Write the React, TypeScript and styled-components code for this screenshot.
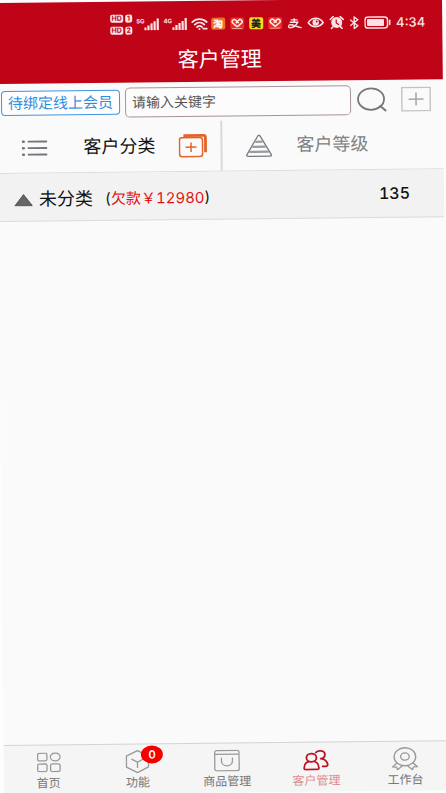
import React from "react";
import styled, { createGlobalStyle } from "styled-components";

const GlobalStyle = createGlobalStyle`
  * { box-sizing: border-box; }
  body {
    margin: 0;
    background: #fdfdfd;
    font-family: Inter, "Noto Sans CJK SC", sans-serif;
  }
  button, input { font-family: inherit; }
`;

const Stage = styled.div`
  height: 100vh;
  overflow: hidden;
`;

/* The whole page lies at a slight tilt. */
const Page = styled.div`
  display: flex;
  flex-direction: column;
  width: 100%;
  height: calc(100vh - 1px);
  background: #fafafa;
  transform-origin: 0 0;
  transform: translate(-4px, 3px) rotate(-0.6deg);
`;

const Header = styled.header`
  padding: 10px 0;
  background: #c00418;
  color: #fff;
`;

const StatusBar = styled.div`
  display: flex;
  align-items: center;
  justify-content: flex-end;
  gap: 5px;
  height: 26px;
  padding-right: 17px;
  color: #fbe3e5;
`;

const NetworkGroup = styled.div`
  display: flex;
  align-items: center;
  gap: 4px;
  margin-right: -2px;
`;

const HdStack = styled.div`
  display: grid;
  grid-template-columns: 13px 7px;
  gap: 4px 2px;
`;

const HdTag = styled.span`
  height: 8px;
  border-radius: 2px;
  background: #fbe3e5;
  color: #c00418;
  font-size: 7px;
  font-weight: 700;
  line-height: 8px;
  text-align: center;
`;

const Signal = styled.div`
  display: flex;
  align-items: center;
`;

const Network = styled.span`
  align-self: flex-start;
  font-size: 6px;
  font-weight: 700;
  line-height: 6px;
`;

const AppTile = styled.span<{ $bg: string; $fg: string }>`
  width: 14px;
  height: 12px;
  border-radius: 2px;
  background: ${(p) => p.$bg};
  color: ${(p) => p.$fg};
  font-size: 10px;
  font-weight: 900;
  line-height: 12px;
  text-align: center;
  svg { display: block; margin: 0 auto; }
`;

const Clock = styled.span`
  font-size: 13px;
  font-weight: 500;
  line-height: 16px;
`;

const Title = styled.h1`
  margin: 0;
  padding-top: 11px;
  font-size: 21px;
  font-weight: 400;
  line-height: 24px;
  text-align: center;
`;

const SearchRow = styled.form`
  display: flex;
  align-items: center;
  height: 39px;
  padding: 0 12px 0 4px;
`;

const BindButton = styled.button`
  flex: none;
  height: 25px;
  padding: 0 6px;
  border: 1px solid #3f95df;
  border-radius: 4px;
  background: #fdfdfd;
  color: #2f8ddd;
  font-size: 15px;
  line-height: 20px;
  white-space: nowrap;
`;

const Keyword = styled.input`
  flex: 1;
  min-width: 0;
  height: 30px;
  margin-left: 5px;
  padding: 0 6px;
  border: 1px solid #a89494;
  border-radius: 5px;
  background: #fcfcfc;
  color: #333;
  font-size: 14px;
  &::placeholder { color: #555; opacity: 1; }
`;

const IconButton = styled.button<{ $gap: number }>`
  flex: none;
  display: flex;
  margin: 0 0 0 ${(p) => p.$gap}px;
  padding: 0;
  border: 0;
  background: none;
`;

const Tabs = styled.nav`
  display: grid;
  grid-template-columns: 1fr 1fr;
  height: 51px;
  border-bottom: 1px solid #dcdcdc;
`;

const TabCell = styled.div<{ $start: number }>`
  display: flex;
  align-items: center;
  padding-left: ${(p) => p.$start}px;
  & + & { border-left: 2px solid #d9d9d9; }
`;

const TabButton = styled.button<{ $active?: boolean; $gap: number }>`
  margin: 0;
  padding: 0 0 0 ${(p) => p.$gap}px;
  border: 0;
  background: none;
  color: ${(p) => (p.$active ? "#111" : "#808080")};
  font-size: 18px;
  line-height: 24px;
  white-space: nowrap;
`;

const GroupRow = styled.button`
  display: flex;
  align-items: center;
  width: 100%;
  height: 48px;
  padding: 0 34px 0 16px;
  border: 0;
  border-bottom: 1px solid #dcdcdc;
  background: #f2f2f2;
  color: #111;
  font-size: 18px;
  text-align: left;
  font-variant-numeric: tabular-nums;
  svg { margin-top: 6px; }
`;

const GroupName = styled.span`
  padding: 4px 0 0 6px;
  line-height: 24px;
`;

const Debt = styled.span`
  flex: 1;
  padding: 4px 0 0 12px;
  font-size: 15px;
  line-height: 24px;
`;

const Amount = styled.span`
  color: #e01414;
`;

const Count = styled.span`
  padding-bottom: 2px;
  font-size: 16px;
  font-weight: 500;
  line-height: 24px;
`;

const List = styled.main`
  flex: 1;
`;

const Footer = styled.nav`
  display: grid;
  grid-template-columns: repeat(5, 1fr);
  height: 50px;
  border-top: 1px solid #d4d4d4;
  background: #f5f5f5;
`;

const FooterLink = styled.a<{ $active?: boolean }>`
  display: flex;
  flex-direction: column;
  align-items: center;
  padding-top: 4px;
  color: ${(p) => (p.$active ? "#df8b92" : "#777")};
  font-size: 12px;
  line-height: 16px;
  text-decoration: none;
  white-space: nowrap;
`;

const IconSlot = styled.span`
  position: relative;
  display: flex;
  height: 26px;
  align-items: center;
`;

const Badge = styled.span`
  position: absolute;
  left: 16px;
  top: -3px;
  width: 22px;
  height: 18px;
  border-radius: 50%;
  background: #f40000;
  color: #fff;
  font-size: 11px;
  font-weight: 600;
  line-height: 18px;
  text-align: center;
`;

const SignalBars = ({ network }: { network: string }) => (
  <Signal>
    <Network>{network}</Network>
    <svg width="15" height="12" viewBox="0 0 15 12" fill="currentColor">
      <rect x="0" y="9" width="2.2" height="3" />
      <rect x="3.1" y="7" width="2.2" height="5" />
      <rect x="6.2" y="5" width="2.2" height="7" />
      <rect x="9.3" y="3" width="2.2" height="9" />
      <rect x="12.4" y="0" width="2.2" height="12" />
    </svg>
  </Signal>
);

const HeartTile = () => (
  <AppTile $bg="#ee2a24" $fg="#fff">
    <svg width="14" height="12" viewBox="0 0 14 12" fill="none" stroke="#ffe9e6" strokeWidth="1.6">
      <path d="M7 9.3 2.5 5.5C.8 3.5 3.8.8 5.6 2.8L8.400 5.600M7 9.300l4.500-3.800C13.200 3.500 10.200.8 8.400 2.800L5.600 5.600" />
      <path d="M2 11h10" stroke="#f9a09a" strokeWidth="1" />
    </svg>
  </AppTile>
);

const WifiIcon = () => (
  <svg width="17" height="13" viewBox="0 0 17 13" fill="none" stroke="currentColor" strokeWidth="1.8" strokeLinecap="round">
    <path d="M1 4.2C5 .2 11.5.2 15.5 4.2M3.5 6.7c2.8-2.6 6.8-2.6 9.5 0M5.8 9.2c1.5-1.4 3.5-1.4 5 0" />
    <circle cx="8.2" cy="11.2" r="1" fill="currentColor" stroke="none" />
    <path d="M12 10.8h3.5" />
  </svg>
);

const PayIcon = () => (
  <svg width="15" height="11" viewBox="0 0 15 11" fill="none" stroke="currentColor" strokeWidth="1.400" strokeLinecap="round">
    <path d="M4 2h6M7 .8v3.400M3 4.300h7.500C9 7.500 6 9.800 3 9.800.8 9.800.6 7.200 3.200 6.800c2.800-.3 5.800 2.200 10.600 3" />
  </svg>
);

const EyeIcon = () => (
  <svg width="17" height="12" viewBox="0 0 17 12" fill="none" stroke="currentColor" strokeWidth="1.600">
    <path d="M1 6c3.800-5.800 11.200-5.800 15 0-3.800 5.300-11.200 5.300-15 0Z" />
    <circle cx="8.500" cy="5.700" r="3.200" fill="currentColor" stroke="none" />
    <circle cx="9.500" cy="4.800" r="1" fill="#c00418" stroke="none" />
  </svg>
);

const AlarmIcon = () => (
  <svg width="15" height="14" viewBox="0 0 15 14">
    <circle cx="7.500" cy="7" r="5.500" fill="currentColor" />
    <path d="M1 4 4 1.200M14 4 11 1.200M3.800 11.200 2.200 13M11.200 11.200l1.600 1.800" stroke="currentColor" strokeWidth="1.600" strokeLinecap="round" />
    <path d="M7 4v3.500l2.600 1.800" fill="none" stroke="#c00418" strokeWidth="1.200" />
  </svg>
);

const BluetoothIcon = () => (
  <svg width="10" height="13" viewBox="0 0 10 13" fill="none" stroke="currentColor" strokeWidth="1.400">
    <path d="M1 3.500 8.500 9.500 5 12.300V.7l3.500 2.800L1 9.500" />
  </svg>
);

const BatteryIcon = () => (
  <svg width="27" height="13" viewBox="0 0 27 13">
    <rect x=".8" y="1" width="22.500" height="11" rx="3" fill="none" stroke="currentColor" strokeWidth="1.500" />
    <rect x="2.800" y="3" width="17" height="7" rx="1" fill="currentColor" />
    <path d="M25.500 4.500v4" stroke="currentColor" strokeWidth="1.600" strokeLinecap="round" />
  </svg>
);

const SearchIcon = () => (
  <svg width="30" height="26" viewBox="0 0 30 26" fill="none" stroke="#777" strokeWidth="1.800">
    <ellipse cx="14" cy="12" rx="13" ry="10.700" />
    <path d="M22.500 18.500 29 24" strokeWidth="2" />
  </svg>
);

const AddIcon = () => (
  <svg width="30" height="25" viewBox="0 0 30 25" fill="none">
    <rect x=".8" y=".8" width="28.400" height="23.400" stroke="#c2c2c2" strokeWidth="1.400" />
    <path d="M7.500 12.500h15M15 6v13" stroke="#a8a8a8" strokeWidth="1.600" />
  </svg>
);

const ListIcon = () => (
  <svg width="26" height="17" viewBox="0 0 26 17" stroke="#74747c" strokeWidth="1.900" strokeLinecap="round">
    <path d="M7 2h18M7 8.500h18M7 15h18" />
    <path d="M1.500 2h.8M1.500 8.500h.8M1.500 15h.8" strokeWidth="2.400" />
  </svg>
);

const AddGroupIcon = () => (
  <svg width="29" height="24" viewBox="0 0 29 24" fill="none" stroke="#e5632b">
    <path d="M5 1.600h20q2 0 2 2V18.500" strokeWidth="2.800" />
    <rect x="1" y="3.600" width="23" height="19" rx="2.500" fill="#fafafa" strokeWidth="1.500" />
    <path d="M7 13.200h11M12.500 8.500v9.500" strokeWidth="1.500" />
  </svg>
);

const PyramidIcon = () => (
  <svg width="27" height="23" viewBox="0 0 27 23" fill="none" stroke="#777b80" strokeWidth="1.300" strokeLinejoin="round">
    <path d="M12.400 1.700q1.100-1.400 2.200 0L25.600 20.200q.8 1.800-1.200 1.800H2.600q-2 0-1.200-1.800Z" />
    <path d="M9.800 7.500h7.400M6.800 12.500h13.400M3.800 17.500h19.400" strokeWidth="2.200" stroke="#989b9f" />
  </svg>
);

const HomeIcon = () => (
  <svg width="24" height="20" viewBox="0 0 24 20" fill="none" stroke="#999" strokeWidth="1.300">
    <rect x=".7" y=".7" width="9.300" height="7.600" rx="1.500" />
    <ellipse cx="18.300" cy="4.500" rx="4.900" ry="3.900" />
    <rect x=".7" y="11.500" width="9.300" height="7.600" rx="1.500" />
    <rect x="13.600" y="11.500" width="9.500" height="7.600" rx="1.500" />
  </svg>
);

const CubeIcon = () => (
  <svg width="25" height="24" viewBox="0 0 25 24" fill="none" stroke="#999" strokeWidth="1.300" strokeLinejoin="round">
    <path d="M12.500 1 23.500 6.500v11L12.500 23 1.500 17.500v-11ZM6.500 9.500l6 3 6-3M12.500 12.500v6" />
  </svg>
);

const GoodsIcon = () => (
  <svg width="26" height="22" viewBox="0 0 26 22" fill="none" stroke="#999" strokeWidth="1.300">
    <rect x=".8" y=".8" width="24.400" height="20.400" rx="2" />
    <path d="M1 4.600h24M7.500 8v3c0 7 11 7 11 0V8" />
  </svg>
);

const CustomersIcon = () => (
  <svg width="26" height="21" viewBox="0 0 26 21" fill="none" stroke="#be1020" strokeWidth="1.800" strokeLinecap="round" strokeLinejoin="round">
    <ellipse cx="8.500" cy="8" rx="5" ry="4.200" />
    <path d="M5.500 11.800C2 13 1 16 1.200 18.800q.1 1 1.200 1h12.200q1.100 0 1.200-1c.2-2.800-.8-5.800-4.300-7" />
    <path d="M13 2.800c2-2.600 9-2.200 9 2 0 2.700-2.200 4-4.200 4.200 3.500.3 6 2.500 6.800 5.300.5 2.200-.8 2.700-5 2.500" />
  </svg>
);

const MedalIcon = () => (
  <svg width="28" height="24" viewBox="0 0 28 24" fill="none" stroke="#999" strokeWidth="1.300" strokeLinejoin="round">
    <ellipse cx="14" cy="10" rx="10.800" ry="9" />
    <ellipse cx="14" cy="9.800" rx="4.300" ry="3.600" />
    <path d="M6 16.200 1.500 20l4 .2 1 2.800 5.300-4.200M22 16.200l4.500 3.800-4 .2-1 2.800-5.300-4.200" />
  </svg>
);

const footerItems = [
  { label: "首页", icon: <HomeIcon /> },
  { label: "功能", icon: <CubeIcon />, badge: 0 },
  { label: "商品管理", icon: <GoodsIcon /> },
  { label: "客户管理", icon: <CustomersIcon />, active: true },
  { label: "工作台", icon: <MedalIcon /> },
];

export default function App() {
  return (
    <Stage>
      <GlobalStyle />
      <Page>
        <Header>
          <StatusBar>
            <NetworkGroup>
              <HdStack>
                <HdTag>HD</HdTag>
                <HdTag>1</HdTag>
                <HdTag>HD</HdTag>
                <HdTag>2</HdTag>
              </HdStack>
              <SignalBars network="5G" />
              <SignalBars network="4G" />
              <WifiIcon />
            </NetworkGroup>
            <AppTile $bg="#f0702a" $fg="#fff">淘</AppTile>
            <HeartTile />
            <AppTile $bg="#f3dc1c" $fg="#222">美</AppTile>
            <HeartTile />
            <PayIcon />
            <EyeIcon />
            <AlarmIcon />
            <BluetoothIcon />
            <BatteryIcon />
            <Clock>4:34</Clock>
          </StatusBar>
          <Title>客户管理</Title>
        </Header>
        <SearchRow onSubmit={(e) => e.preventDefault()}>
          <BindButton type="button">待绑定线上会员</BindButton>
          <Keyword type="text" aria-label="关键字" placeholder="请输入关键字" />
          <IconButton $gap={6} type="submit" aria-label="搜索">
            <SearchIcon />
          </IconButton>
          <IconButton $gap={14} type="button" aria-label="添加">
            <AddIcon />
          </IconButton>
        </SearchRow>
        <Tabs>
          <TabCell $start={24}>
            <ListIcon />
            <TabButton $active $gap={36}>客户分类</TabButton>
            <IconButton $gap={23} type="button" aria-label="添加分类">
              <AddGroupIcon />
            </IconButton>
          </TabCell>
          <TabCell $start={23}>
            <PyramidIcon />
            <TabButton $gap={24}>客户等级</TabButton>
          </TabCell>
        </Tabs>
        <List>
          <GroupRow type="button">
            <svg width="19" height="13" viewBox="0 0 19 13">
              <path d="M9.500 1 18 12H1Z" fill="#666" stroke="#555" strokeLinejoin="round" />
            </svg>
            <GroupName>未分类</GroupName>
            <Debt>
              (<Amount>欠款￥12980</Amount>)
            </Debt>
            <Count>135</Count>
          </GroupRow>
        </List>
        <Footer>
          {footerItems.map((item) => (
            <FooterLink key={item.label} href="#" $active={item.active}>
              <IconSlot>
                {item.icon}
                {item.badge !== undefined && <Badge>{item.badge}</Badge>}
              </IconSlot>
              {item.label}
            </FooterLink>
          ))}
        </Footer>
      </Page>
    </Stage>
  );
}
